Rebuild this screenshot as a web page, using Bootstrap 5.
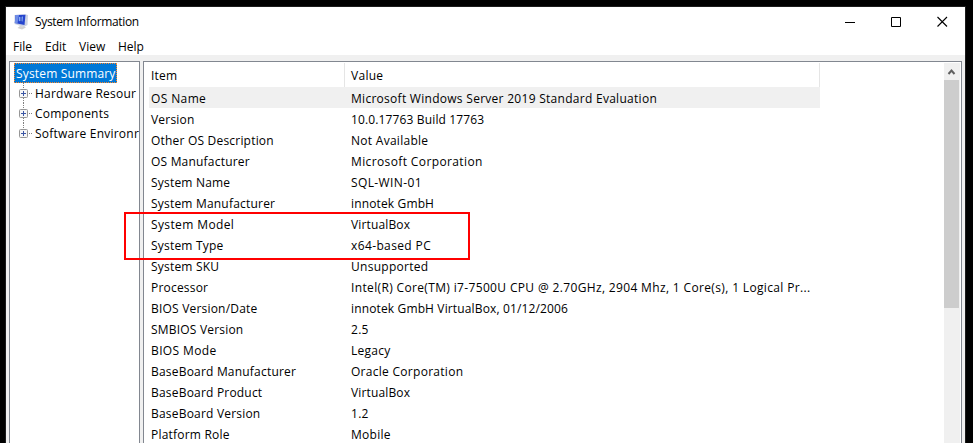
<!DOCTYPE html>
<html lang="en">
<head>
<meta charset="utf-8">
<title>System Information</title>
<link href="https://cdn.jsdelivr.net/npm/bootstrap@5.3.0/dist/css/bootstrap.min.css" rel="stylesheet">
<style>
html,body{height:443px;overflow:hidden}
body{background:#000;color:#000;font:12px/20px "Open Sans","Noto Sans",sans-serif;padding:6px 7px 0 5px;letter-spacing:.28px;white-space:nowrap}
.win{height:437px;background:#fff;border:1px solid #1c1c1c;border-bottom:0}
.titlebar{height:29px;padding:0 17px 0 8px}
.caption{letter-spacing:-.35px;margin-left:6px}
.controls{gap:35px}
.menus{height:19px;line-height:22px;padding-left:7px;letter-spacing:0}
.m1{width:32px}.m2{width:34px}.m3{width:39px}
.client{height:388px;background:#f0f0f0;padding:6px 3px 0 3px;gap:3px}
.pane{background:#fff;border:1px solid #828790;border-bottom:0}
.tree{width:131px;padding:1px 1px 0 4px}
.node{height:20px;line-height:22px}
.kid{padding-left:5px;letter-spacing:.22px}
.twig{width:16px;height:20px;flex:none}
.picked{background:#0078d7;color:#fff;outline:1px dotted #ff8728;outline-offset:-1px;width:103px;padding-left:2px;letter-spacing:.16px}
.list{padding:1px 1px 0 5px}
.grid-area{width:671px}
.line{height:21px;line-height:23px;padding-left:2px}
.head{height:24px;line-height:26px;border-right:1px solid #e5e5e5}
.c1{width:200px;flex:none;letter-spacing:.2px}
.head .c1{width:194px;border-right:1px solid #e5e5e5;margin-right:6px}
.chosen{background:#f0f0f0}
.cpu{letter-spacing:.35px}
.tight{letter-spacing:.14px}
.roomy{letter-spacing:.38px}
.scroll{width:16px;background:#f0f0f0}
.arrow{width:16px;height:17px}
.thumb{height:228px;width:15px;background:#cdcdcd}
.redbox{left:124px;top:212px;width:346px;height:48px;border:2px solid #f00}
</style>
<script src="https://cdn.jsdelivr.net/npm/bootstrap@5.3.0/dist/js/bootstrap.bundle.min.js"></script>
</head>
<body class="position-relative">
<main class="win">
 <header class="titlebar d-flex align-items-center">
  <svg width="15" height="16" viewBox="0 0 15 16"><path d="M.5 1 11 .3 14 1 13.500 11 10 13 .5 10Z" fill="#ccd2e2"/><path d="M1.500 1 11.500 .8 10.500 11 .8 9Z" fill="#2545cf"/><path d="M1.500 1 5 1 3.500 9.500 .8 9Z" fill="#6f8de6"/><path d="M5 3 9 2.500 8.500 7.500 4.800 7Z" fill="#86abf5"/><path d="M7 2v6" stroke="#1732b0"/><path d="M6 12 10 12.500 12 13.500 8 15.500 3.500 14Z" fill="#d2d2d2"/></svg>
  <span class="caption">System Information</span>
  <div class="controls d-flex align-items-center ms-auto">
   <svg width="11" height="12" shape-rendering="crispEdges"><path d="M0 6.500H10" stroke="#000"/></svg>
   <svg width="11" height="12"><path d="M.5 1.500h9v9h-9z" fill="none" stroke="#000"/></svg>
   <svg width="11" height="12"><path d="M.5 1 10 10.500M10 1 .5 10.500" stroke="#000" stroke-width="1.100"/></svg>
  </div>
 </header>
 <nav class="menus d-flex"><span class="m1">File</span><span class="m2">Edit</span><span class="m3">View</span><span>Help</span></nav>
 <div class="client d-flex">
  <aside class="pane tree overflow-hidden">
   <div class="node picked">System Summary</div>
   <div class="node kid d-flex"><svg class="twig"><use href="#plus"/><path d="M4.500 0V6M4.500 15V20" stroke="#808080" stroke-dasharray="1 1"/></svg><span>Hardware Resour</span></div>
   <div class="node kid d-flex"><svg class="twig"><use href="#plus"/><path d="M4.500 0V6M4.500 15V20" stroke="#808080" stroke-dasharray="1 1"/></svg><span>Components</span></div>
   <div class="node kid d-flex"><svg class="twig"><use href="#plus"/><path d="M4.500 0V6" stroke="#808080" stroke-dasharray="1 1"/></svg><span>Software Environr</span></div>
  </aside>
  <section class="pane list flex-grow-1 d-flex justify-content-between">
   <div class="grid-area">
    <div class="line head d-flex"><span class="c1">Item</span><span>Value</span></div>
    <div class="line chosen d-flex"><span class="c1 roomy">OS Name</span><span>Microsoft Windows Server 2019 Standard Evaluation</span></div>
    <div class="line d-flex"><span class="c1">Version</span><span class="tight">10.0.17763 Build 17763</span></div>
    <div class="line d-flex"><span class="c1">Other OS Description</span><span>Not Available</span></div>
    <div class="line d-flex"><span class="c1">OS Manufacturer</span><span class="roomy">Microsoft Corporation</span></div>
    <div class="line d-flex"><span class="c1">System Name</span><span class="roomy">SQL-WIN-01</span></div>
    <div class="line d-flex"><span class="c1">System Manufacturer</span><span class="tight">innotek GmbH</span></div>
    <div class="line d-flex"><span class="c1 roomy">System Model</span><span class="tight">VirtualBox</span></div>
    <div class="line d-flex"><span class="c1">System Type</span><span class="roomy">x64-based PC</span></div>
    <div class="line d-flex"><span class="c1">System SKU</span><span>Unsupported</span></div>
    <div class="line d-flex"><span class="c1">Processor</span><span class="cpu">Intel(R) Core(TM) i7-7500U CPU @ 2.70GHz, 2904 Mhz, 1 Core(s), 1 Logical Pr...</span></div>
    <div class="line d-flex"><span class="c1">BIOS Version/Date</span><span class="tight">innotek GmbH VirtualBox, 01/12/2006</span></div>
    <div class="line d-flex"><span class="c1">SMBIOS Version</span><span>2.5</span></div>
    <div class="line d-flex"><span class="c1 roomy">BIOS Mode</span><span>Legacy</span></div>
    <div class="line d-flex"><span class="c1">BaseBoard Manufacturer</span><span>Oracle Corporation</span></div>
    <div class="line d-flex"><span class="c1">BaseBoard Product</span><span class="tight">VirtualBox</span></div>
    <div class="line d-flex"><span class="c1">BaseBoard Version</span><span>1.2</span></div>
    <div class="line d-flex"><span class="c1">Platform Role</span><span>Mobile</span></div>
   </div>
   <div class="scroll d-flex flex-column">
    <svg class="arrow"><path d="M4.500 11 7.500 7.500 10.500 11" fill="none" stroke="#606060" stroke-width="2"/></svg>
    <div class="thumb"></div>
   </div>
  </section>
 </div>
</main>
<div class="redbox position-absolute"></div>
<svg width="0" height="0" class="position-absolute"><defs><g id="plus"><rect x=".5" y="6.500" width="8" height="8" rx="1" fill="#f6f6f6" stroke="#969696"/><path d="M2 10.500H7M4.500 8V13" stroke="#3a55a4"/><path d="M10 10.500H14" stroke="#808080" stroke-dasharray="1 1"/></g></defs></svg>
</body>
</html>
